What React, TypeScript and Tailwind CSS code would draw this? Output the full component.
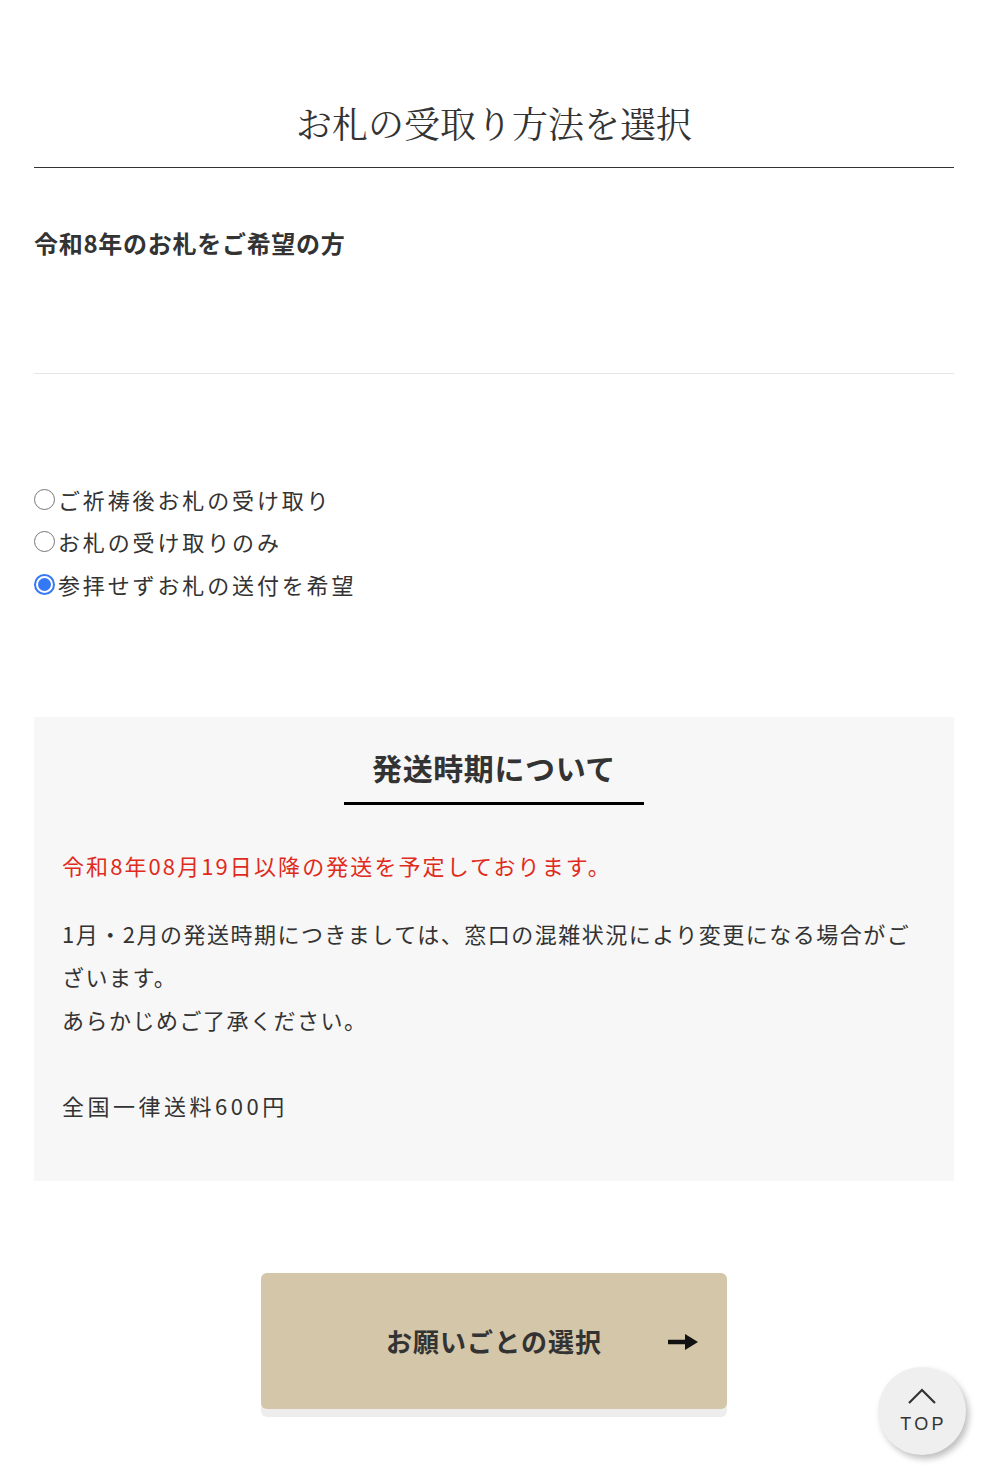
import { useState } from 'react'

const options = ['ご祈祷後お札の受け取り', 'お札の受け取りのみ', '参拝せずお札の送付を希望']

function Radio({ checked }: { checked: boolean }) {
  if (checked) {
    return (
      <span className="w-[21px] h-[21px] rounded-full border-2 border-[#3478f6] bg-white flex items-center justify-center shrink-0">
        <span className="w-[13px] h-[13px] rounded-full bg-[#3478f6]" />
      </span>
    )
  }
  return <span className="w-[21px] h-[21px] rounded-full border-[1.5px] border-[#767676] bg-white shrink-0" />
}

export default function App() {
  const [selected, setSelected] = useState(2)

  return (
    <div className="relative min-h-[1474px] bg-white text-[#333] font-['Noto_Sans_CJK_JP','Noto_Sans',sans-serif]">
      <div className="pl-[34px] pr-[32px] pt-[93px] pb-[56px]">
        <h1 className="text-center text-[36px] leading-[60px] font-['Noto_Serif_CJK_JP','Liberation_Serif','Noto_Sans_CJK_JP',serif] font-normal pb-[14px] border-b border-[#333]">
          お札の受取り方法を選択
        </h1>

        <h2 className="mt-[57px] text-[24px] leading-[36px] font-bold tracking-[0.03em]">令和8年のお札をご希望の方</h2>

        <div className="mt-[112px] border-t border-[#e6e6e6]" />

        {/* receive options */}
        <div className="mt-[104px] flex flex-col">
          {options.map((opt, i) => (
            <label
              key={opt}
              onClick={() => setSelected(i)}
              className="flex items-center h-[42.5px] text-[22px] tracking-[0.13em] cursor-pointer"
            >
              <Radio checked={selected === i} />
              <span className="ml-[3px]">{opt}</span>
            </label>
          ))}
        </div>

        {/* shipping info */}
        <div className="mt-[111px] bg-[#f7f7f7] pt-[28px] pb-[54px] px-[28px]">
          <div className="flex justify-center">
            <h3 className="w-[300px] text-center text-[30px] leading-[45px] font-bold tracking-[0.02em] pb-[12px] border-b-[3px] border-black">
              発送時期について
            </h3>
          </div>
          <p className="mt-[39px] text-[22px] leading-[43px] tracking-[0.095em] text-[#e02b1c]">
            令和8年08月19日以降の発送を予定しております。
          </p>
          <p className="mt-[25px] text-[22px] leading-[43px] tracking-[0.068em] whitespace-nowrap">
            1月・2月の発送時期につきましては、窓口の混雑状況により変更になる場合がご
            <br />
            ざいます。
            <br />
            あらかじめご了承ください。
            <br />
            <br />
            <span className="tracking-[0.16em]">全国一律送料600円</span>
          </p>
        </div>

        <div className="mt-[92px] flex justify-center">
          <button className="relative w-[466px] h-[136px] rounded-[6px] bg-[#d4c6a8] shadow-[0_8px_0_#ededed] flex items-center justify-center">
            <span className="text-[26px] font-bold tracking-[0.04em] text-[#333]">お願いごとの選択</span>
            <svg className="absolute right-[28px] top-[58px]" width="32" height="22" viewBox="0 0 32 22">
              <path d="M1 11 H20" stroke="#111" strokeWidth="4.5" />
              <path d="M18 3 L31 11 L18 19 Z" fill="#111" />
            </svg>
          </button>
        </div>
      </div>

      <button className="absolute left-[878px] top-[1367px] w-[88px] h-[88px] rounded-full bg-[#efefef] shadow-[3px_4px_6px_rgba(0,0,0,0.25)] flex flex-col items-center justify-center">
        <svg width="32" height="18" viewBox="0 0 32 18" className="mt-[-2px]">
          <path d="M3 16 L16 3 L29 16" stroke="#333" strokeWidth="2.2" fill="none" />
        </svg>
        <span className="mt-[9px] text-[18px] leading-[20px] tracking-[0.18em] pl-[3px] text-[#333] font-['Liberation_Sans',sans-serif]">TOP</span>
      </button>
    </div>
  )
}
